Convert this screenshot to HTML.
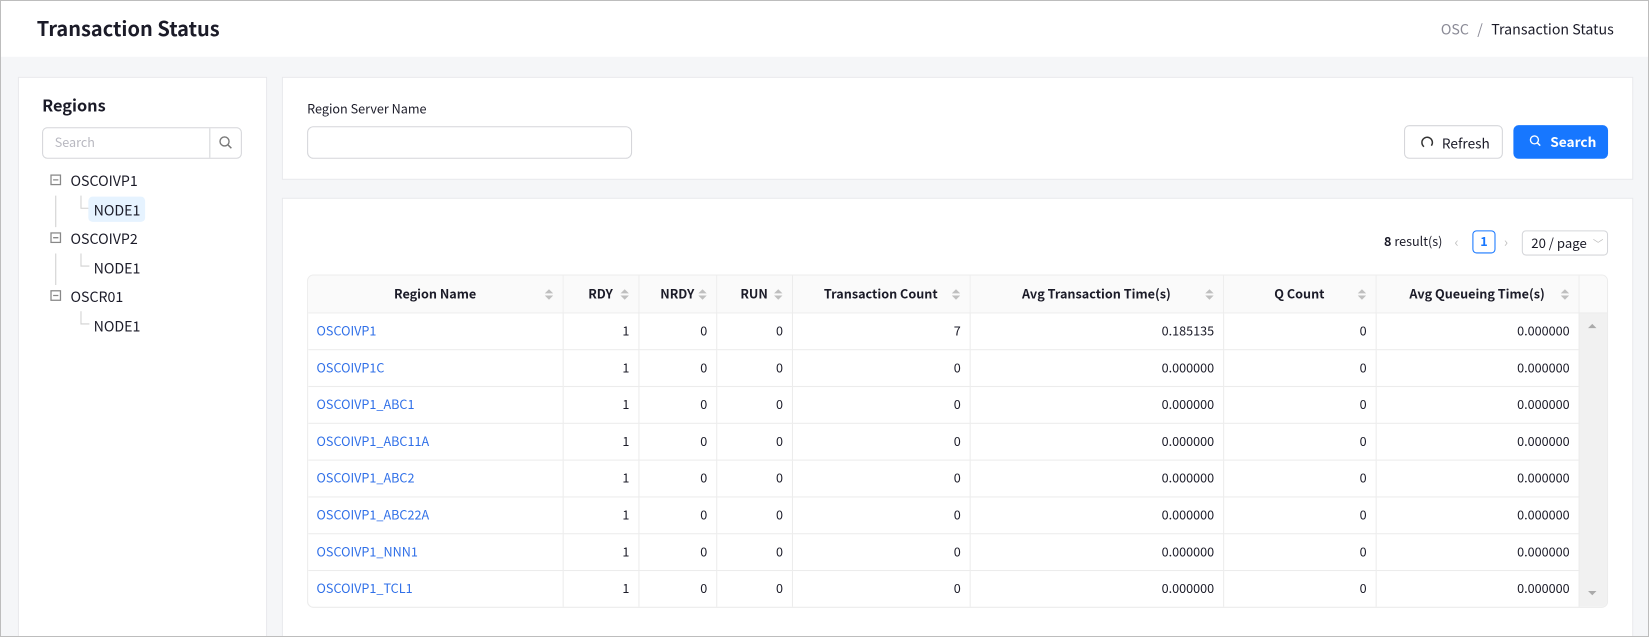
<!DOCTYPE html>
<html><head><meta charset="utf-8"><style>
*{box-sizing:border-box;margin:0;padding:0}
html,body{width:1649px;height:637px;overflow:hidden;background:#f5f6f8}
body{font-family:"Noto Sans CJK KR","Liberation Sans",sans-serif;color:#1b1b28;font-size:12.5px}
#wrap{position:absolute;left:0;top:0;width:1568px;height:605.7px;transform:scale(1.0517);transform-origin:0 0;background:#f5f6f8;overflow:hidden}
#bord{position:absolute;left:0;top:0;width:1649px;height:637px;border:1px solid #bdbdbd;pointer-events:none}
.abs{position:absolute}
.card{position:absolute;background:#fff;border:1px solid #e8e9ec}
table{border-collapse:collapse;table-layout:fixed}
td,th{height:35px;border-bottom:1px solid #ececec;border-right:1px solid #ececec;padding:0 8px;font-size:12px;white-space:nowrap}
th{background:#fafafa;font-weight:700;text-align:center;position:relative}
td{text-align:right}
td.l{text-align:left;color:#2f6fe8}
.sort{position:absolute;right:9px;top:12px;width:8px;height:12px}
</style></head><body><div id="wrap">
<div class="abs" style="left:0;top:0;width:1568px;height:54px;background:#fff"></div>
<div class="abs" style="left:35px;top:13px;font-size:19px;font-weight:700">Transaction Status</div>
<div class="abs" style="left:1370px;top:17px;font-size:13.5px;color:#1b1b28"><span style="color:#8a8a96">OSC</span><span style="color:#8a8a96;margin:0 8px">/</span>Transaction Status</div>

<div class="card" style="left:17px;top:73px;width:237px;height:540px"></div>
<div class="abs" style="left:40px;top:89px;font-size:15.5px;font-weight:700">Regions</div>
<div class="abs" style="left:40px;top:121px;width:190px;height:30px;border:1px solid #d5d6da;border-radius:5px"></div>
<div class="abs" style="left:52px;top:127px;font-size:12px;color:#b8b8c0">Search</div>
<div class="abs" style="left:199px;top:122px;width:1px;height:28px;background:#d5d6da"></div>
<svg class="abs" style="left:207px;top:128px" width="16" height="16" viewBox="0 0 16 16"><circle cx="6.5" cy="6.5" r="4.3" fill="none" stroke="#777" stroke-width="1.3"/><path d="M9.7 9.7L13 13" stroke="#777" stroke-width="1.4"/></svg>
<svg class="abs" style="left:40px;top:160px" width="110" height="160" viewBox="0 0 110 160">
<g fill="none" stroke="#888" stroke-width="1.2"><rect x="8.5" y="6.5" width="9" height="9"/><rect x="8.5" y="61.5" width="9" height="9"/><rect x="8.5" y="116.5" width="9" height="9"/></g>
<path d="M10.5 11h5M10.5 66h5M10.5 121h5" stroke="#888" stroke-width="1.2"/>
<path d="M13 26v30M13 81v30M37 26v12h8M37 81v12h8M37 136v12h8" stroke="#d0d0d0" fill="none"/>
</svg>
<div class="abs" style="left:67px;top:161px;font-size:13.5px">OSCOIVP1</div>
<div class="abs" style="left:84px;top:187px;width:54px;height:24px;background:#e6f3ff;border-radius:4px"></div>
<div class="abs" style="left:89px;top:189px;font-size:13.5px">NODE1</div>
<div class="abs" style="left:67px;top:216px;font-size:13.5px">OSCOIVP2</div>
<div class="abs" style="left:89px;top:244px;font-size:13.5px">NODE1</div>
<div class="abs" style="left:67px;top:271px;font-size:13.5px">OSCR01</div>
<div class="abs" style="left:89px;top:299px;font-size:13.5px">NODE1</div>

<div class="card" style="left:268px;top:73px;width:1285px;height:98px"></div>
<div class="abs" style="left:292px;top:95px;font-size:12px">Region Server Name</div>
<div class="abs" style="left:292px;top:120px;width:309px;height:31px;border:1px solid #d5d6da;border-radius:6px"></div>
<div class="abs" style="left:1335px;top:119px;width:94px;height:32px;border:1px solid #d5d6da;border-radius:5px;background:#fff"></div>
<svg class="abs" style="left:1350px;top:128px" width="14" height="14" viewBox="0 0 14 14"><path d="M4 11.5A5 5 0 1 1 11 10.5" fill="none" stroke="#333" stroke-width="1.4"/></svg>
<div class="abs" style="left:1371px;top:126px;font-size:13px">Refresh</div>
<div class="abs" style="left:1439px;top:119px;width:90px;height:32px;border-radius:5px;background:#1777ff"></div>
<svg class="abs" style="left:1453px;top:127px" width="14" height="14" viewBox="0 0 14 14"><circle cx="6" cy="6" r="3.8" fill="none" stroke="#fff" stroke-width="1.3"/><path d="M8.8 8.8L11.5 11.5" stroke="#fff" stroke-width="1.4"/></svg>
<div class="abs" style="left:1474px;top:125px;font-size:13px;color:#fff;font-weight:700">Search</div>

<div class="card" style="left:268px;top:188px;width:1285px;height:425px"></div>
<div class="abs" style="left:1316px;top:221px;font-size:12px"><b>8</b> result(s)</div>
<div class="abs" style="left:1383px;top:220px;font-size:13px;color:#c0c0c0">‹</div>
<div class="abs" style="left:1400px;top:219px;width:22px;height:22px;border:1px solid #1777ff;border-radius:4px;color:#1777ff;font-weight:700;text-align:center;line-height:20px;font-size:12px">1</div>
<div class="abs" style="left:1430px;top:220px;font-size:13px;color:#c0c0c0">›</div>
<div class="abs" style="left:1447px;top:219px;width:82px;height:24px;border:1px solid #d5d6da;border-radius:4px;font-size:12.5px;padding:1px 0 0 8px">20 / page <span style="color:#bbb;font-size:10px;margin-left:3px">﹀</span></div>

<div class="abs" style="left:292px;top:261px;width:1237px;height:317px;border:1px solid #ececec;border-radius:6px;overflow:hidden">
<table style="width:1236px">
<colgroup><col style="width:242px"><col style="width:72px"><col style="width:74px"><col style="width:72px"><col style="width:169px"><col style="width:241px"><col style="width:145px"><col style="width:193px"><col style="width:28px"></colgroup>
<tr><th>Region Name<svg class="sort" viewBox="0 0 8 12"><path d="M0 5L4 1L8 5zM0 7L4 11L8 7z" fill="#bfbfbf"/></svg></th><th>RDY<svg class="sort" viewBox="0 0 8 12"><path d="M0 5L4 1L8 5zM0 7L4 11L8 7z" fill="#bfbfbf"/></svg></th><th>NRDY<svg class="sort" viewBox="0 0 8 12"><path d="M0 5L4 1L8 5zM0 7L4 11L8 7z" fill="#bfbfbf"/></svg></th><th>RUN<svg class="sort" viewBox="0 0 8 12"><path d="M0 5L4 1L8 5zM0 7L4 11L8 7z" fill="#bfbfbf"/></svg></th><th>Transaction Count<svg class="sort" viewBox="0 0 8 12"><path d="M0 5L4 1L8 5zM0 7L4 11L8 7z" fill="#bfbfbf"/></svg></th><th>Avg Transaction Time(s)<svg class="sort" viewBox="0 0 8 12"><path d="M0 5L4 1L8 5zM0 7L4 11L8 7z" fill="#bfbfbf"/></svg></th><th>Q Count<svg class="sort" viewBox="0 0 8 12"><path d="M0 5L4 1L8 5zM0 7L4 11L8 7z" fill="#bfbfbf"/></svg></th><th>Avg Queueing Time(s)<svg class="sort" viewBox="0 0 8 12"><path d="M0 5L4 1L8 5zM0 7L4 11L8 7z" fill="#bfbfbf"/></svg></th><th style="border-right:none"></th></tr>
<tr><td class="l">OSCOIVP1</td><td>1</td><td>0</td><td>0</td><td>7</td><td>0.185135</td><td>0</td><td>0.000000</td><td rowspan="8" style="background:#f1f1f1;border:none;vertical-align:top;padding:0"><div style="margin-left:8px;margin-top:6px;width:0;height:0;border:4px solid transparent;border-bottom-color:#aaa"></div><div style="margin-left:8px;margin-top:250px;width:0;height:0;border:4px solid transparent;border-top-color:#aaa"></div></td></tr>
<tr><td class="l">OSCOIVP1C</td><td>1</td><td>0</td><td>0</td><td>0</td><td>0.000000</td><td>0</td><td>0.000000</td></tr>
<tr><td class="l">OSCOIVP1_ABC1</td><td>1</td><td>0</td><td>0</td><td>0</td><td>0.000000</td><td>0</td><td>0.000000</td></tr>
<tr><td class="l">OSCOIVP1_ABC11A</td><td>1</td><td>0</td><td>0</td><td>0</td><td>0.000000</td><td>0</td><td>0.000000</td></tr>
<tr><td class="l">OSCOIVP1_ABC2</td><td>1</td><td>0</td><td>0</td><td>0</td><td>0.000000</td><td>0</td><td>0.000000</td></tr>
<tr><td class="l">OSCOIVP1_ABC22A</td><td>1</td><td>0</td><td>0</td><td>0</td><td>0.000000</td><td>0</td><td>0.000000</td></tr>
<tr><td class="l">OSCOIVP1_NNN1</td><td>1</td><td>0</td><td>0</td><td>0</td><td>0.000000</td><td>0</td><td>0.000000</td></tr>
<tr><td class="l">OSCOIVP1_TCL1</td><td>1</td><td>0</td><td>0</td><td>0</td><td>0.000000</td><td>0</td><td>0.000000</td></tr>
</table></div>
</div><div id="bord"></div></body></html>
